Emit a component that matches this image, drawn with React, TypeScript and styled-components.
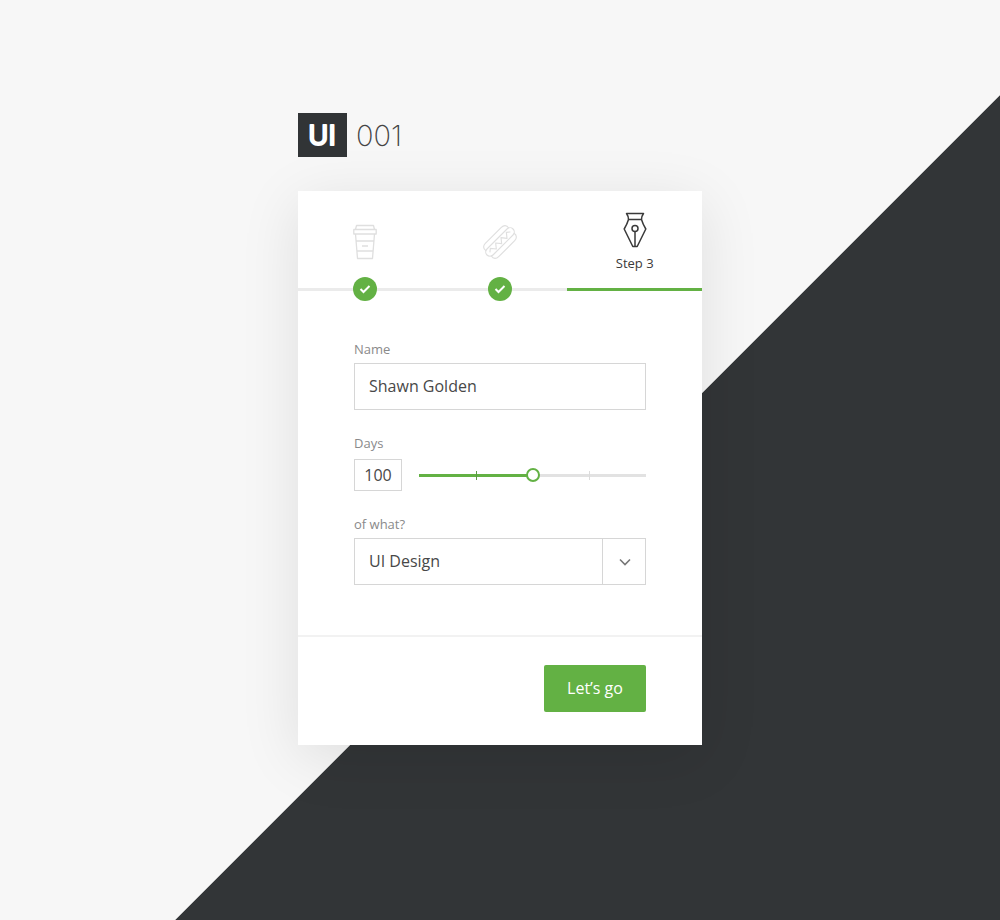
import { useState } from 'react';
import type { CSSProperties, FormEvent, ReactNode } from 'react';
import styled, { createGlobalStyle, css } from 'styled-components';

const green = '#63b144';
const sans = "'Open Sans', 'Noto Sans', sans-serif";

const GlobalStyle = createGlobalStyle`
  *, *::before, *::after { box-sizing: border-box; }
  body {
    margin: 0;
    font-family: ${sans};
    color: #444;
  }
`;

const Page = styled.main`
  min-height: 100vh;
  padding: 113px 24px 48px;
  background: linear-gradient(135deg, #f7f7f7 774px, #323537 775px);
`;

const Column = styled.div`
  max-width: 404px;
  margin: 0 auto;
`;

const Brand = styled.h1`
  display: flex;
  align-items: center;
  gap: 9px;
  margin: 0 0 34px;
`;

const BrandMark = styled.svg`
  flex: none;
  width: 49px;
  height: 44px;
  background: #313436;
`;

const BrandText = styled.text`
  fill: #fff;
  stroke: #fff;
  stroke-width: 2px;
  stroke-linejoin: round;
  font-family: Inter, sans-serif;
  font-size: 27px;
  font-weight: 400;
  text-anchor: middle;
`;

const BrandNumber = styled.span`
  padding-top: 2px;
  color: #444;
  font-family: Inter, sans-serif;
  font-size: 29px;
  font-weight: 200;
  line-height: 42px;
`;

const Card = styled.form`
  background: #fff;
  box-shadow: 0 12px 56px rgba(0, 0, 0, 0.1);
`;

const Steps = styled.ol`
  display: grid;
  grid-template-columns: repeat(3, 1fr);
  margin: 0;
  padding: 0;
  list-style: none;
`;

const StepItem = styled.li<{ $active?: boolean }>`
  position: relative;
  display: flex;
  flex-direction: column;
  align-items: center;
  justify-content: center;
  gap: 6px;
  height: 100px;
  padding-top: 4px;
  border-bottom: 3px solid ${({ $active }) => ($active ? green : '#ebebeb')};
  color: ${({ $active }) => ($active ? '#3a3a3a' : '#dfdfdf')};
  font-size: 13px;
  line-height: 18px;
`;

const DoneBadge = styled.span`
  position: absolute;
  bottom: -13px;
  left: 50%;
  display: flex;
  align-items: center;
  justify-content: center;
  width: 24px;
  height: 24px;
  margin-left: -12px;
  border-radius: 50%;
  background: ${green};
`;

const Fields = styled.div`
  display: flex;
  flex-direction: column;
  gap: 24px;
  padding: 49px 56px 50px;
`;

const Field = styled.div`
  display: flex;
  flex-direction: column;
  gap: 5px;
`;

const Label = styled.label`
  color: #8a8a8a;
  font-size: 13px;
  line-height: 18px;
`;

const control = css`
  width: 100%;
  height: 47px;
  padding: 0 14px 2px;
  border: 1px solid #d6d6d6;
  border-radius: 0;
  background: #fff;
  color: #484848;
  font-family: ${sans};
  font-size: 16px;
`;

const TextBox = styled.input`
  ${control}
`;

const SliderRow = styled.div`
  display: flex;
  align-items: center;
  gap: 17px;
  padding-top: 2px;
`;

const NumberBox = styled.input`
  ${control}
  flex: none;
  width: 48px;
  height: 32px;
  padding: 0;
  text-align: center;
`;

const Slider = styled.input`
  appearance: none;
  flex: 1;
  min-width: 0;
  height: 14px;
  margin: 0;
  background:
    linear-gradient(#5c9a45, #5c9a45) 25% 50% / 1px 9px no-repeat,
    linear-gradient(#dcdcdc, #dcdcdc) 75% 50% / 1px 9px no-repeat,
    linear-gradient(${green}, ${green}) 0 50% / var(--filled) 3px no-repeat,
    linear-gradient(#e2e2e2, #e2e2e2) 0 50% / 100% 3px no-repeat;

  &::-webkit-slider-thumb {
    appearance: none;
    width: 14px;
    height: 14px;
    border: 2px solid ${green};
    border-radius: 50%;
    background: #fff;
  }
`;

const SelectWrap = styled.div`
  position: relative;
`;

const Select = styled.select`
  ${control}
  appearance: none;
`;

const SelectArrow = styled.span`
  position: absolute;
  top: 0;
  right: 0;
  bottom: 0;
  display: flex;
  align-items: center;
  justify-content: center;
  width: 44px;
  border-left: 1px solid #d6d6d6;
  color: #777;
  pointer-events: none;
`;

const Footer = styled.footer`
  display: flex;
  justify-content: flex-end;
  padding: 28px 56px 33px;
  border-top: 2px solid #f2f2f2;
`;

const SubmitButton = styled.button`
  width: 102px;
  height: 47px;
  padding: 0 0 2px;
  border: 0;
  border-radius: 2px;
  background: ${green};
  color: #fff;
  font-family: ${sans};
  font-size: 16px;
`;

const CupIcon = () => (
  <svg width="24" height="36" viewBox="0 0 24 36" fill="none" stroke="currentColor" strokeWidth="1.3" strokeLinejoin="round" aria-hidden="true">
    <path d="M2.500 5.500 3.500 1.500h17l1 4M.8 5.500h22.400v4.500H.8zM2.500 10l2 24.500h15l2-24.500M3 17h18M4 27h16M9 22h6" />
  </svg>
);

const HotDogIcon = () => (
  <svg width="34" height="34" viewBox="0 0 36 36" fill="none" stroke="currentColor" strokeWidth="1.2" strokeLinejoin="round" strokeLinecap="round" aria-hidden="true">
    <g transform="rotate(-45 18 18)">
      <path d="M1 14C0 10 3 8 6 8H30C33 8 36 10 35 14" />
      <path d="M1 22C0 26 3 28 6 28H30C33 28 36 26 35 22" />
      <rect x="-1.500" y="13.500" width="39" height="9" rx="4.500" />
      <path d="M3 18l3-2.500 4 5 4-5 4 5 4-5 4 5 4-5 3 2.500" />
    </g>
  </svg>
);

const PenIcon = () => (
  <svg width="24" height="36" viewBox="0 0 24 36" fill="none" stroke="currentColor" strokeWidth="1.500" strokeLinejoin="round" aria-hidden="true">
    <path d="M3.500 1.500h17c-1.500 2-2 4-2 6h-13c0-2-.5-4-2-6zM5.500 7.500C4.500 11 3 14 1.200 17L9.800 34.500h4.400L22.800 17C21 14 19.500 11 18.500 7.500M12 19.500v15" />
    <circle cx="12" cy="16.500" r="3" />
  </svg>
);

const CheckIcon = () => (
  <svg width="12" height="10" viewBox="0 0 12 10" fill="none" stroke="#fff" strokeWidth="2" aria-hidden="true">
    <path d="M1.500 5 4.500 8 10.500 2" />
  </svg>
);

const ChevronIcon = () => (
  <svg width="12" height="8" viewBox="0 0 12 8" fill="none" stroke="currentColor" strokeWidth="1.600" aria-hidden="true">
    <path d="M1 1.500 6 6.500 11 1.500" />
  </svg>
);

interface StepProps {
  icon: ReactNode;
  label?: string;
}

const Step = ({ icon, label }: StepProps) => (
  <StepItem $active={Boolean(label)} aria-current={label ? 'step' : undefined}>
    {icon}
    {label ? (
      <span>{label}</span>
    ) : (
      <DoneBadge>
        <CheckIcon />
      </DoneBadge>
    )}
  </StepItem>
);

const MAX_DAYS = 200;

export default function App() {
  const [name, setName] = useState('Shawn Golden');
  const [days, setDays] = useState(100);

  return (
    <>
      <GlobalStyle />
      <Page>
        <Column>
          <Brand>
            <BrandMark viewBox="0 0 49 44">
              <BrandText x="24" y="32">UI</BrandText>
            </BrandMark>
            <BrandNumber>001</BrandNumber>
          </Brand>
          <Card onSubmit={(event: FormEvent) => event.preventDefault()}>
            <Steps>
              <Step icon={<CupIcon />} />
              <Step icon={<HotDogIcon />} />
              <Step icon={<PenIcon />} label="Step 3" />
            </Steps>
            <Fields>
              <Field>
                <Label htmlFor="name">Name</Label>
                <TextBox id="name" value={name} onChange={(e) => setName(e.target.value)} />
              </Field>
              <Field>
                <Label htmlFor="days">Days</Label>
                <SliderRow>
                  <NumberBox
                    id="days"
                    inputMode="numeric"
                    value={days}
                    onChange={(e) => setDays(Math.min(MAX_DAYS, Number(e.target.value) || 0))}
                  />
                  <Slider
                    type="range"
                    aria-label="Days"
                    min={0}
                    max={MAX_DAYS}
                    value={days}
                    onChange={(e) => setDays(Number(e.target.value))}
                    style={{ '--filled': `${(days / MAX_DAYS) * 100}%` } as CSSProperties}
                  />
                </SliderRow>
              </Field>
              <Field>
                <Label htmlFor="subject">of what?</Label>
                <SelectWrap>
                  <Select id="subject" defaultValue="UI Design">
                    <option>UI Design</option>
                  </Select>
                  <SelectArrow>
                    <ChevronIcon />
                  </SelectArrow>
                </SelectWrap>
              </Field>
            </Fields>
            <Footer>
              <SubmitButton type="submit">Let’s go</SubmitButton>
            </Footer>
          </Card>
        </Column>
      </Page>
    </>
  );
}
